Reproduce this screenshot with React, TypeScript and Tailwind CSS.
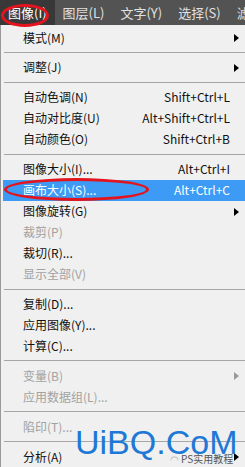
const FONT = { fontFamily: '"Noto Sans CJK SC", "Noto Sans", sans-serif' };

type Item =
  | { sep: true }
  | { label: string; shortcut?: string; sub?: boolean; disabled?: boolean; active?: boolean };

const TABS = ['图像(I)', '图层(L)', '文字(Y)', '选择(S)', '滤镜'];

const ITEMS: Item[] = [
  { label: '模式(M)', sub: true },
  { sep: true },
  { label: '调整(J)', sub: true },
  { sep: true },
  { label: '自动色调(N)', shortcut: 'Shift+Ctrl+L' },
  { label: '自动对比度(U)', shortcut: 'Alt+Shift+Ctrl+L' },
  { label: '自动颜色(O)', shortcut: 'Shift+Ctrl+B' },
  { sep: true },
  { label: '图像大小(I)...', shortcut: 'Alt+Ctrl+I' },
  { label: '画布大小(S)...', shortcut: 'Alt+Ctrl+C', active: true },
  { label: '图像旋转(G)', sub: true },
  { label: '裁剪(P)', disabled: true },
  { label: '裁切(R)...' },
  { label: '显示全部(V)', disabled: true },
  { sep: true },
  { label: '复制(D)...' },
  { label: '应用图像(Y)...' },
  { label: '计算(C)...' },
  { sep: true },
  { label: '变量(B)', sub: true, disabled: true },
  { label: '应用数据组(L)...', disabled: true },
  { sep: true },
  { label: '陷印(T)...', disabled: true },
  { sep: true },
  { label: '分析(A)', sub: true },
];

function Arrow({ color }: { color: string }) {
  return (
    <svg width="5" height="8" viewBox="0 0 5 8" className="absolute right-[6px] top-[7px]">
      <path d="M0 0 L5 4 L0 8 Z" fill={color} />
    </svg>
  );
}

export default function App() {
  return (
    <div className="relative w-[245px] h-[467px] overflow-hidden bg-[#f0f0f0]" style={FONT}>
      {/* barra de menús */}
      <div className="flex h-[25px] bg-[#535353] text-[13px] text-[#e0e0e0] overflow-hidden">
        {TABS.map((t, i) => (
          <div
            key={t}
            className={`flex items-center px-2 whitespace-nowrap shrink-0 ${i === 0 ? 'bg-[#383838] text-white' : ''}`}
          >
            {t}
          </div>
        ))}
      </div>

      {/* menú desplegable */}
      <div className="flex flex-col pt-[2px] border-l border-[#9a9a9a] h-[442px] text-[12px]">
        {ITEMS.map((it, idx) => {
          if ('sep' in it) {
            return (
              <div key={idx} className="h-[9px] flex items-center pl-[3px]">
                <div className="h-px w-full bg-[#a6a6a6]" />
              </div>
            );
          }
          const color = it.active ? 'text-white' : it.disabled ? 'text-[#a2a2a2]' : 'text-[#111]';
          return (
            <div
              key={idx}
              className={`relative h-[21px] shrink-0 flex items-center justify-between ml-[2px] pl-[20px] pr-[15px] whitespace-nowrap ${color} ${it.active ? 'bg-[#3d9bf5]' : ''}`}
            >
              <span>{it.label}</span>
              {it.shortcut && <span>{it.shortcut}</span>}
              {it.sub && <Arrow color={it.disabled ? '#9a9a9a' : '#000'} />}
            </div>
          );
        })}
      </div>

      {/* marcas rojas */}
      <div className="absolute left-[1px] top-[4px] w-[48px] h-[23px] rounded-[50%] border-[3px] border-[#e3141e]" />
      <div className="absolute left-[4px] top-[178px] w-[145px] h-[23px] rounded-[50%] border-[3px] border-[#e3141e]" />

      {/* marca de agua */}
      <div className="absolute left-[170px] top-[451px] flex items-center gap-[2px] text-[10px] text-[#555]">
        <span className="text-[#aaa]">◠</span>
        <span>PS实用教程</span>
      </div>
      <div
        className="absolute left-[75px] top-[425px] text-[34px] leading-none text-[#1e78d6]"
        style={{ fontFamily: '"Liberation Sans", Arial, sans-serif' }}
      >
        UiBQ.CoM
      </div>
    </div>
  );
}
